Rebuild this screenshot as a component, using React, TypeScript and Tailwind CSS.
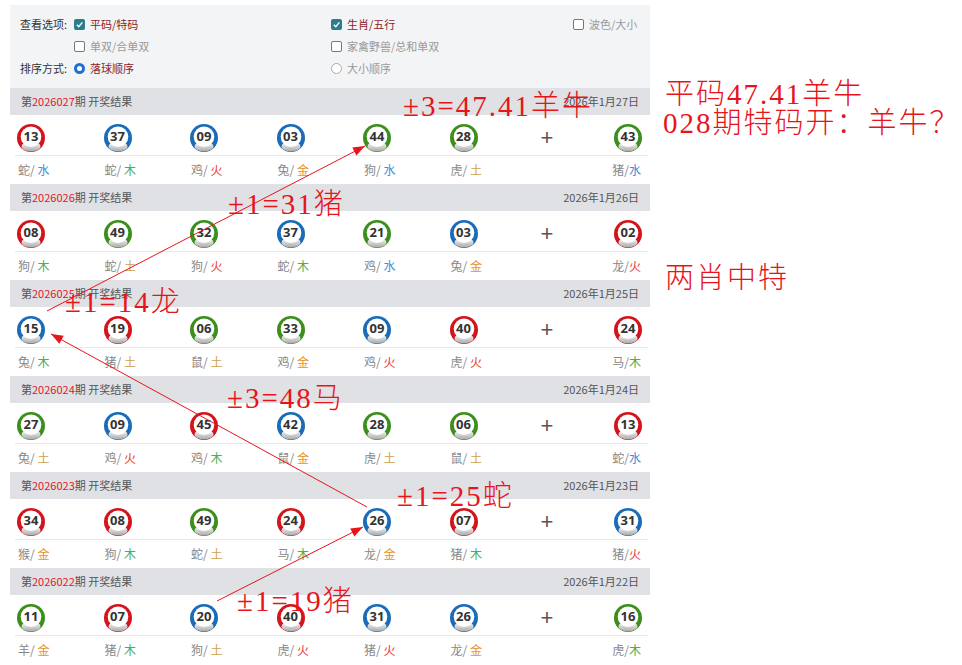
import React from 'react';

type Draw = { id: string; date: string; nums: [number, string, string][] };

const DRAWS: Draw[] = [
  { id: '2026027', date: '2026年1月27日', nums: [[13, '蛇', '水'], [37, '蛇', '木'], [9, '鸡', '火'], [3, '兔', '金'], [44, '狗', '水'], [28, '虎', '土'], [43, '猪', '水']] },
  { id: '2026026', date: '2026年1月26日', nums: [[8, '狗', '木'], [49, '蛇', '土'], [32, '狗', '火'], [37, '蛇', '木'], [21, '鸡', '水'], [3, '兔', '金'], [2, '龙', '火']] },
  { id: '2026025', date: '2026年1月25日', nums: [[15, '兔', '木'], [19, '猪', '土'], [6, '鼠', '土'], [33, '鸡', '金'], [9, '鸡', '火'], [40, '虎', '火'], [24, '马', '木']] },
  { id: '2026024', date: '2026年1月24日', nums: [[27, '兔', '土'], [9, '鸡', '火'], [45, '鸡', '木'], [42, '鼠', '金'], [28, '虎', '土'], [6, '鼠', '土'], [13, '蛇', '水']] },
  { id: '2026023', date: '2026年1月23日', nums: [[34, '猴', '金'], [8, '狗', '木'], [49, '蛇', '土'], [24, '马', '木'], [26, '龙', '金'], [7, '猪', '木'], [31, '猪', '火']] },
  { id: '2026022', date: '2026年1月22日', nums: [[11, '羊', '金'], [7, '猪', '木'], [20, '狗', '土'], [40, '虎', '火'], [31, '猪', '火'], [26, '龙', '金'], [16, '虎', '木']] },
];

const RED_NUMS = [1, 2, 7, 8, 12, 13, 18, 19, 23, 24, 29, 30, 34, 35, 40, 45, 46];
const BLUE_NUMS = [3, 4, 9, 10, 14, 15, 20, 25, 26, 31, 36, 37, 41, 42, 47, 48];

const ballColor = (n: number) =>
  RED_NUMS.includes(n) ? '#d3141b' : BLUE_NUMS.includes(n) ? '#1a6bb8' : '#3c8f1c';

const ELEMENT_CLASS: Record<string, string> = {
  金: 'text-[#e8901e]',
  木: 'text-[#4caf50]',
  水: 'text-[#3d8fd9]',
  火: 'text-[#e8413a]',
  土: 'text-[#cf9f4e]',
};

const Ball = ({ n }: { n: number }) => {
  const c = ballColor(n);
  const gid = `shine-${n}`;
  return (
    <div className="relative w-[28px] h-[28px]">
      <svg width="28" height="28" viewBox="0 0 28 28" className="absolute inset-0">
        <defs>
          <linearGradient id={gid} x1="0" y1="0" x2="0" y2="1">
            <stop offset="0" stopColor="#ffffff" />
            <stop offset="1" stopColor="#a9a9a9" />
          </linearGradient>
        </defs>
        <circle cx="14" cy="14" r="14" fill={c} />
        <ellipse cx="14" cy="22.5" rx="9.5" ry="5" fill={`url(#${gid})`} />
        <circle cx="14" cy="12.8" r="10.3" fill="#fff" />
      </svg>
      <span className="absolute left-0 right-0 top-[4px] text-center text-[13px] leading-[17px] font-bold text-[#333] font-['Open_Sans',sans-serif]">
        {String(n).padStart(2, '0')}
      </span>
    </div>
  );
};

const Check = ({ on }: { on?: boolean }) =>
  on ? (
    <span className="w-[11px] h-[11px] rounded-[2px] bg-[#2b7d8c] flex items-center justify-center">
      <svg width="9" height="9" viewBox="0 0 10 10">
        <path d="M2 5.2 L4.2 7.4 L8.2 2.6" stroke="#fff" strokeWidth="1.6" fill="none" />
      </svg>
    </span>
  ) : (
    <span className="w-[11px] h-[11px] rounded-[2px] border border-[#777] bg-white" />
  );

const Radio = ({ on }: { on?: boolean }) =>
  on ? (
    <span className="w-[11px] h-[11px] rounded-full border-[3px] border-[#1e6fd0] bg-white" />
  ) : (
    <span className="w-[11px] h-[11px] rounded-full border border-[#aaa] bg-white" />
  );

const Opt = ({ on, radio, children }: { on?: boolean; radio?: boolean; children: React.ReactNode }) => (
  <div className={`flex items-center gap-[5px] ${on ? 'text-[#8b1c2c]' : 'text-[#9a9a9a]'}`}>
    {radio ? <Radio on={on} /> : <Check on={on} />}
    <span>{children}</span>
  </div>
);

const DrawBlock = ({ d }: { d: Draw }) => {
  const main = d.nums.slice(0, 6);
  const sp = d.nums[6];
  return (
    <div>
      <div className="h-[27px] bg-[#dfe1e5] flex items-center justify-between px-[11px] text-[11px] text-[#555]">
        <span>
          第<span className="text-[#e4161f]">{d.id}</span>期 开奖结果
        </span>
        <span>{d.date}</span>
      </div>
      <div className="h-[41px] ml-[5px] mr-[2px] border-b border-[#e8e8e8] flex items-center pt-[5px] pl-[2px] pr-[6px]">
        {main.map(([n], i) => (
          <div key={i} className="w-[86.5px]">
            <Ball n={n} />
          </div>
        ))}
        <div className="w-[22px] text-center text-[22px] leading-none text-[#555] font-['Liberation_Sans',sans-serif]">+</div>
        <div className="flex-1 flex justify-end">
          <Ball n={sp[0]} />
        </div>
      </div>
      <div className="h-[28px] flex items-center pl-[8px] pr-[9px] text-[12px] text-[#888]">
        {main.map(([, z, e], i) => (
          <div key={i} className="w-[86.5px]">
            {z}/ <span className={ELEMENT_CLASS[e]}>{e}</span>
          </div>
        ))}
        <div className="w-[22px]" />
        <div className="flex-1 text-right">
          {sp[1]}/<span className={ELEMENT_CLASS[sp[2]]}>{sp[2]}</span>
        </div>
      </div>
    </div>
  );
};

const arrowHead = (x1: number, y1: number, x2: number, y2: number) => {
  const len = Math.hypot(x2 - x1, y2 - y1);
  const ux = (x2 - x1) / len;
  const uy = (y2 - y1) / len;
  const bx = x2 - ux * 12;
  const by = y2 - uy * 12;
  return `${x2},${y2} ${bx - uy * 4.5},${by + ux * 4.5} ${bx + uy * 4.5},${by - ux * 4.5}`;
};

const ARROWS: [number, number, number, number][] = [
  [47, 311, 365, 146],
  [367, 507, 51, 334],
  [217, 601, 363, 527],
];

const NOTES: { text: string; x: number; y: number }[] = [
  { text: '±3=47.41羊牛', x: 403, y: 91 },
  { text: '±1=31猪', x: 228, y: 189 },
  { text: '±1=14龙', x: 65, y: 287 },
  { text: '±3=48马', x: 227, y: 383 },
  { text: '±1=25蛇', x: 397, y: 481 },
  { text: '±1=19猪', x: 237, y: 586 },
  { text: '平码47.41羊牛', x: 665, y: 79 },
  { text: '028期特码开：羊牛？', x: 663, y: 108 },
  { text: '两肖中特', x: 665, y: 263 },
];

export default function App() {
  return (
    <div className="relative w-[962px] h-[665px] bg-white overflow-hidden font-['Noto_Sans_CJK_SC',sans-serif]">
      <div className="ml-[10px] w-[640px]">
        {/* view options */}
        <div className="mt-[5px] h-[83px] bg-[#f3f4f6] pt-[8px] pl-[10px] text-[11px] text-[#333] grid grid-cols-[54px_257px_242px_1fr] auto-rows-[22px] items-center">
          <span>查看选项:</span>
          <Opt on>平码/特码</Opt>
          <Opt on>生肖/五行</Opt>
          <Opt>波色/大小</Opt>

          <span />
          <Opt>单双/合单双</Opt>
          <Opt>家禽野兽/总和单双</Opt>
          <span />

          <span>排序方式:</span>
          <Opt radio on>落球顺序</Opt>
          <Opt radio>大小顺序</Opt>
          <span />
        </div>

        {DRAWS.map((d) => (
          <DrawBlock key={d.id} d={d} />
        ))}
      </div>

      {/* hand-drawn annotations */}
      <svg className="absolute inset-0 pointer-events-none" width="962" height="665">
        {ARROWS.map(([x1, y1, x2, y2], i) => (
          <g key={i}>
            <line x1={x1} y1={y1} x2={x2} y2={y2} stroke="#e8141c" strokeWidth="1" />
            <polygon points={arrowHead(x1, y1, x2, y2)} fill="#e8141c" />
          </g>
        ))}
      </svg>
      {NOTES.map((n, i) => (
        <div
          key={i}
          className="absolute whitespace-nowrap text-[29px] leading-[30px] tracking-[2px] font-light text-[#e8141c] font-['Liberation_Serif','Noto_Sans_CJK_SC',serif]"
          style={{ left: n.x, top: n.y }}
        >
          {n.text}
        </div>
      ))}
    </div>
  );
}
